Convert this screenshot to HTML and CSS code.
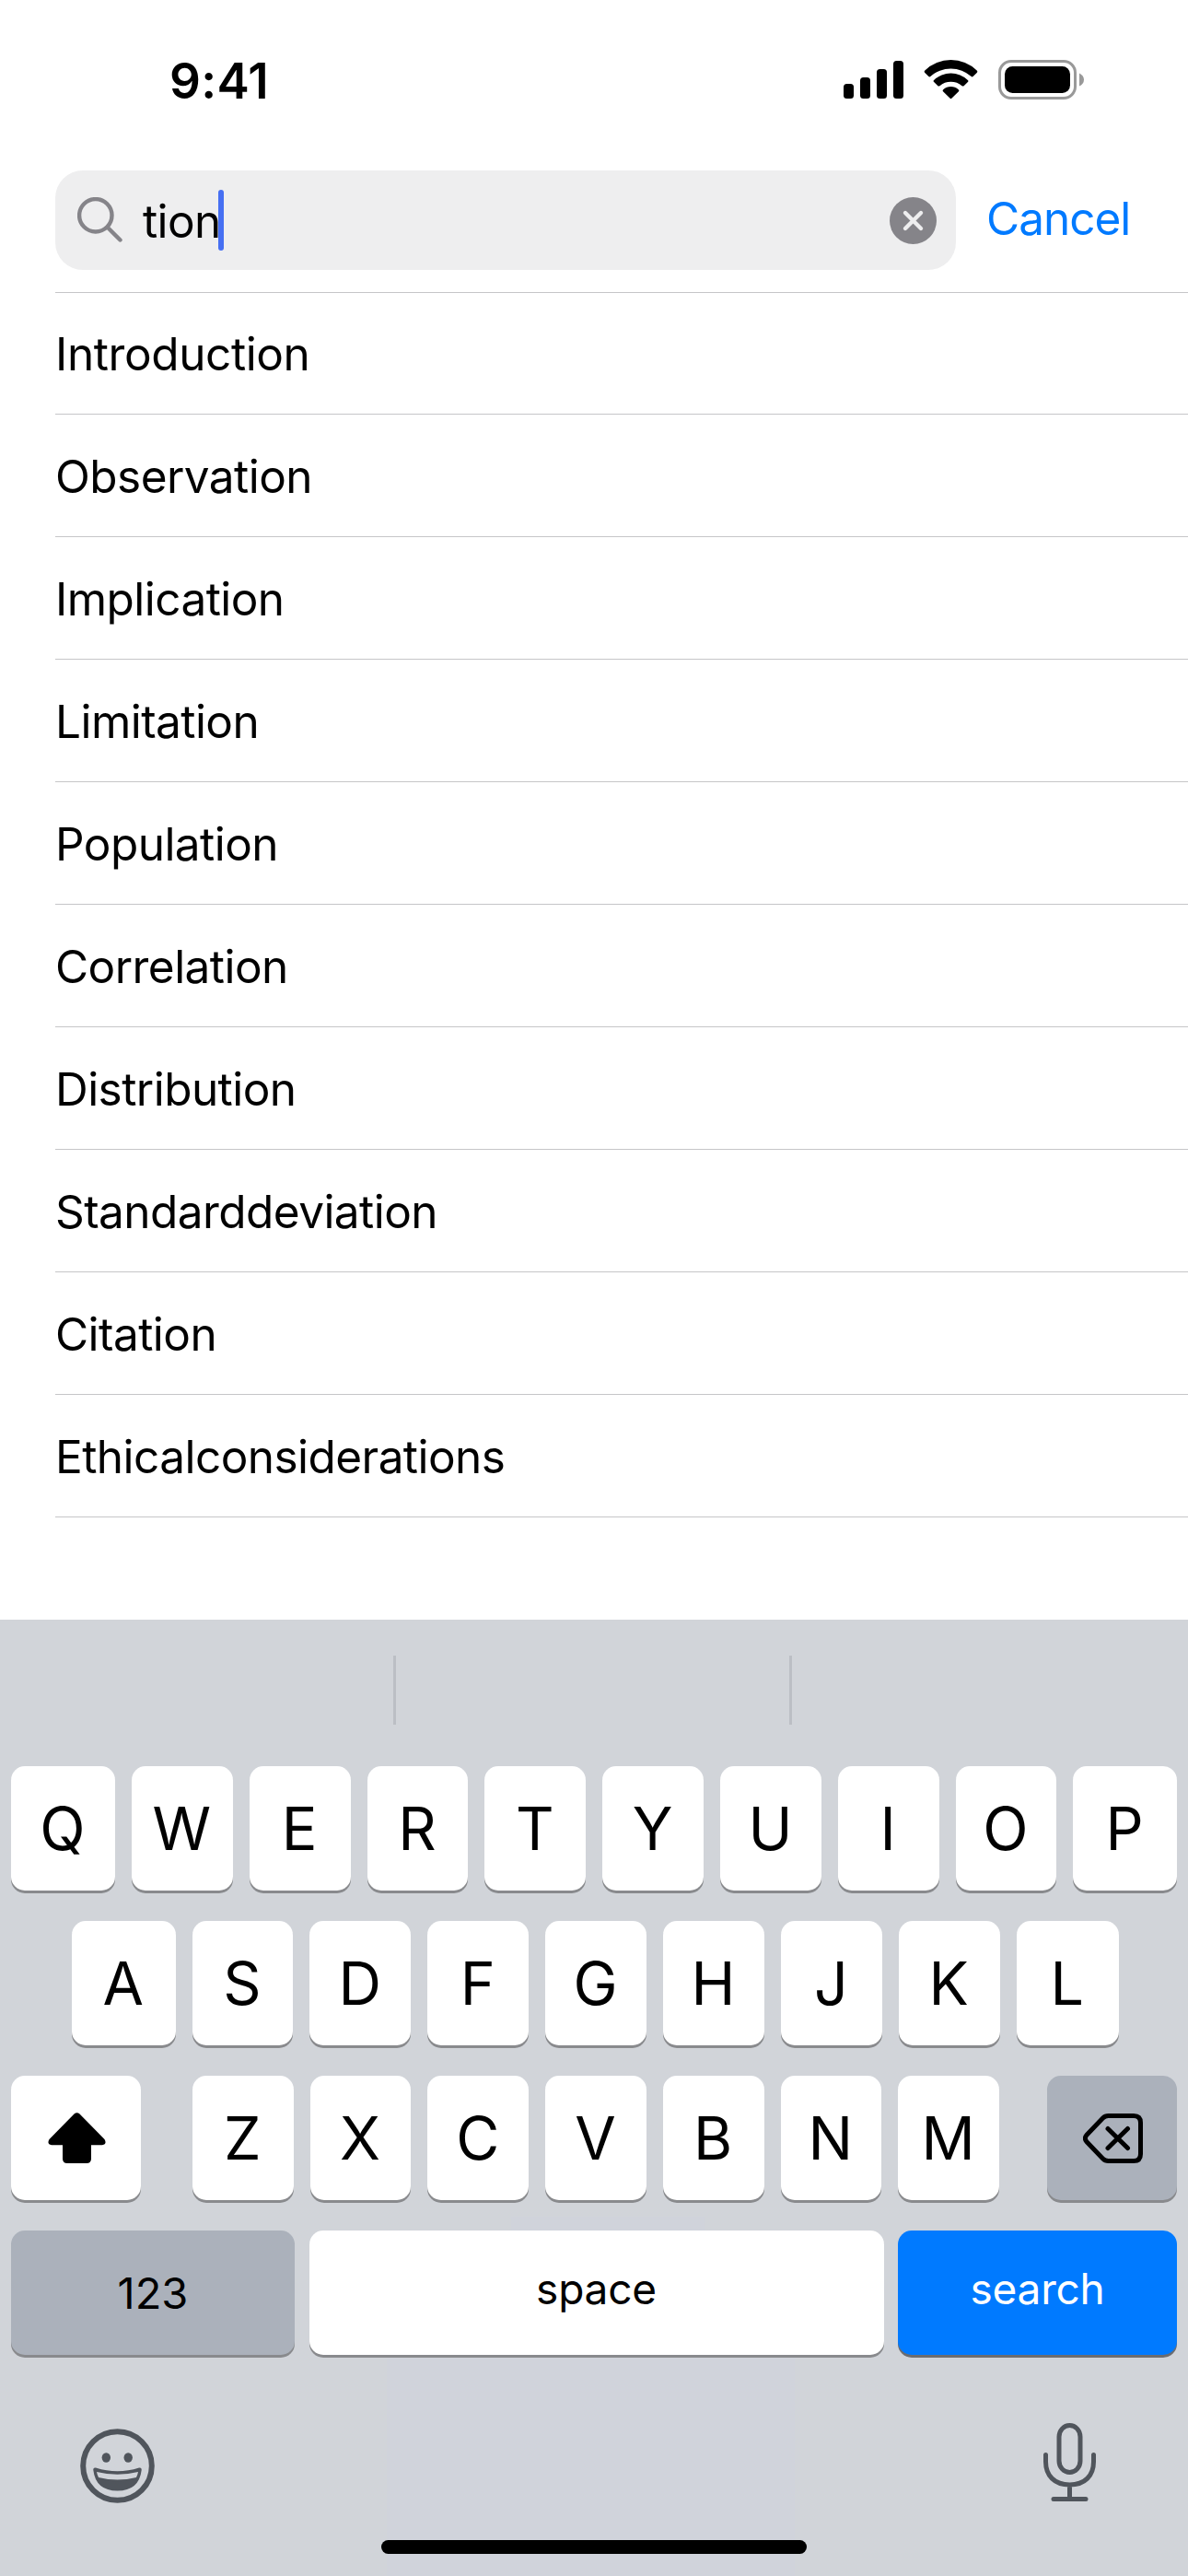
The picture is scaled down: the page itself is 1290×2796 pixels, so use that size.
FILE: index.html
```html
<!DOCTYPE html>
<html lang="en">
<head>
<meta charset="utf-8">
<title>Search</title>
<link rel="stylesheet" href="styles.css">
</head>
<body>
<div class="screen">
  <header class="status-bar">
    <time class="clock">9:41</time>
    <svg class="status-icons" viewBox="0 0 264 54" aria-hidden="true">
      <g>
        <rect x="0" y="34" width="11" height="16" rx="3.5"/>
        <rect x="18" y="27" width="11" height="23" rx="3.5"/>
        <rect x="36" y="18" width="11" height="32" rx="3.5"/>
        <rect x="54" y="9" width="11" height="41" rx="3.5"/>
      </g>
      <path d="M88.300 22Q87 20.800 88.300 19.500A40.500 40.500 0 0 1 144.700 19.500Q146 20.800 144.700 22L140.600 26Q139.700 26.800 138.700 26A33 33 0 0 0 94.300 26Q93.300 26.800 92.400 26Z"/>
      <path d="M98.100 32Q97 31 98.100 29.900A26.500 26.500 0 0 1 134.900 29.900Q136 31 134.900 32L130.600 36.200Q129.600 37 128.600 36.200A18.700 18.700 0 0 0 104.400 36.200Q103.400 37 102.400 36.200Z"/>
      <path d="M108 42.200Q107 41.200 108.200 40.200A12.500 12.500 0 0 1 124.800 40.200Q126 41.200 125 42.200L117.300 49.800Q116.500 50.600 115.700 49.800Z"/>
      <rect class="battery-shell" x="169.500" y="9.500" width="82" height="40" rx="12.500"/>
      <rect x="175" y="15" width="71" height="29" rx="8.500"/>
      <path class="battery-cap" d="M256 22.500Q261 25 261 29.500T256 36.500Z"/>
    </svg>
  </header>

  <div class="search-row">
    <label class="search-field">
      <svg class="search-icon" viewBox="0 0 50 50" aria-hidden="true"><circle cx="19.8" cy="19.8" r="17.7"/><path d="M33 33L46.5 46.5"/></svg>
      <span class="query">tion</span><span class="caret"></span>
      <svg class="clear-icon" viewBox="0 0 51 51" aria-hidden="true"><circle cx="25.5" cy="25.5" r="25.5"/><path d="M17 17L34 34M34 17L17 34"/></svg>
    </label>
    <a class="cancel">Cancel</a>
  </div>

  <ul class="results">
    <li>Introduction</li>
    <li>Observation</li>
    <li>Implication</li>
    <li>Limitation</li>
    <li>Population</li>
    <li>Correlation</li>
    <li>Distribution</li>
    <li>Standarddeviation</li>
    <li>Citation</li>
    <li>Ethicalconsiderations</li>
  </ul>

  <section class="keyboard">
    <div class="suggestions"><span></span><span></span><span></span></div>
    <div class="keys keys-top">
      <button class="key">Q</button><button class="key">W</button><button class="key">E</button><button class="key">R</button><button class="key">T</button><button class="key">Y</button><button class="key">U</button><button class="key">I</button><button class="key">O</button><button class="key">P</button>
    </div>
    <div class="keys keys-home">
      <button class="key">A</button><button class="key">S</button><button class="key">D</button><button class="key">F</button><button class="key">G</button><button class="key">H</button><button class="key">J</button><button class="key">K</button><button class="key">L</button>
    </div>
    <div class="keys keys-bottom">
      <button class="key shift" aria-label="Shift"><svg width="63" height="55" viewBox="0 0 63 55"><path d="M28.500 1.600Q31.500-1 34.500 1.600L61.500 29Q64.500 34.500 59 35.300H47V50Q47 55 42 55H21Q16 55 16 50V35.300H4Q-1.500 34.500 1.500 29Z"/></svg></button>
      <div class="letters">
        <button class="key">Z</button><button class="key">X</button><button class="key">C</button><button class="key">V</button><button class="key">B</button><button class="key">N</button><button class="key">M</button>
      </div>
      <button class="key gray delete" aria-label="Delete"><svg width="65" height="54" viewBox="0 0 65 54"><path d="M27.500 2.500H55Q62.500 2.500 62.500 10V44Q62.500 51.500 55 51.500H27.500Q24 51.500 21.500 49L3.800 30.500Q1 27 3.800 23.500L21.500 5Q24 2.500 27.500 2.500ZM27 16.500L48.500 37.500M48.500 16.500L27 37.500"/></svg></button>
    </div>
    <div class="keys keys-action">
      <button class="key gray word numbers">123</button>
      <button class="key word">space</button>
      <button class="key word search">search</button>
    </div>
    <div class="keyboard-footer">
      <svg class="emoji" width="81" height="81" viewBox="0 0 81 81" aria-hidden="true">
        <circle class="line" cx="40.500" cy="40.500" r="37.300"/>
        <ellipse cx="28.300" cy="31.500" rx="4.700" ry="5.200"/><ellipse cx="52.200" cy="31.500" rx="4.700" ry="5.200"/>
        <path fill-rule="evenodd" d="M17 42.500Q40.500 50 64 42.500Q67 42 66.700 45Q64 67.500 40.500 67.500Q17 67.500 14.300 45Q14 42 17 42.500ZM18 47Q18.500 50 20 53Q40.500 58 61 53Q62.500 50 63 47Q40.500 52.500 18 47Z"/>
      </svg>
      <svg width="57" height="86" viewBox="0 0 57 86" aria-hidden="true"><path class="line mic" d="M28.500 2.500A11.500 12.500 0 0 1 40 15V41A11.500 12.500 0 0 1 17 41V15A11.500 12.500 0 0 1 28.500 2.500ZM2.500 34.500V42C2.500 57 12 67 28.500 67S54.500 57 54.500 42V34.500M28.500 67V82.500M11 82.500H46"/></svg>
    </div>
    <div class="home-indicator"></div>
  </section>
</div>
</body>
</html>
```
FILE: styles.css
```css
* { box-sizing: border-box; }
body { margin: 0; background: #fff; font-family: Inter, "Liberation Sans", sans-serif; color: #000; }
.screen { width: 1290px; height: 2796px; display: flex; flex-direction: column; overflow: hidden; }
.status-bar { height: 185px; display: flex; padding: 57px 110px 0 184px; justify-content: space-between; }
.clock { font-size: 53px; line-height: 62px; font-weight: 600; letter-spacing: 0.3px; }
.status-icons { width: 264px; height: 54px; }
.battery-shell { fill: none; stroke: #999; stroke-width: 3; }
.battery-cap { fill: #999; }
.search-row { height: 132px; display: flex; align-items: flex-start; padding-left: 60px; gap: 33px; }
.search-field { width: 978px; height: 108px; border-radius: 30px; background: #eeeeef; display: flex; align-items: center; padding: 0 21px 0 24px; }
.search-icon { width: 50px; height: 50px; fill: none; stroke: #858489; stroke-width: 4.4; stroke-linecap: round; margin-right: 21px; }
.query { font-size: 49.5px; line-height: 60px; letter-spacing: -0.6px; margin: 2px -3px 0 0; }
.caret { width: 6px; height: 66px; border-radius: 3px; background: #466ff2; }
.clear-icon { width: 51px; height: 51px; margin-left: auto; fill: #858489; stroke-linecap: round; }
.clear-icon path { stroke: #eeeeef; stroke-width: 4.4; }
.cancel { color: #007aff; font-size: 49.5px; line-height: 60px; letter-spacing: -1px; margin-top: 22px; }
.results { list-style: none; margin: 0 0 0 60px; padding: 0; border-top: 1px solid #c6c6c8; height: 1441px; }
.results li { height: 133px; border-bottom: 1px solid #c6c6c8; font-size: 49.5px; line-height: 134px; letter-spacing: -0.55px; }
.results li:first-child { height: 132px; line-height: 132px; letter-spacing: -0.4px; }
.keyboard {
  height: 1038px;
  background:
    linear-gradient(#d0d3db, #d0d3db) 555px 648px / 210px 30px no-repeat,
    linear-gradient(#d0d3db, #d0d3db) 420px 720px / 443px 318px no-repeat,
    #d1d4d9;
}
.suggestions { height: 159px; padding: 39px 0 45px; display: grid; grid-template-columns: 430px 430px 430px; }
.suggestions span + span { box-shadow: -3px 0 #bcbfc5; }
.keys { display: grid; column-gap: 18px; height: 135px; margin: 0 12px 33px; }
.keys-top { grid-template-columns: 113px repeat(8, 1fr) 112.6px; }
.keys-home { grid-template-columns: 112.6px repeat(7, 1fr) 111.4px; margin-inline: 78px 75px; }
.keys-bottom { grid-template-columns: 141px 876px 141px; column-gap: 0; }
.keys-bottom .letters { margin: 0 -56px 0 56px; }
.keys-bottom .delete { margin: 0 -108px 0 108px; }
.letters { display: grid; grid-template-columns: repeat(7, 1fr); column-gap: 18px; }
.keys-action { grid-template-columns: 308px 624px 303px; column-gap: 15.5px; margin-bottom: 0; }
.key { border: 0; padding: 1px 1px 0 0; margin: 0; border-radius: 15px; background: #fff; box-shadow: 0 3px #898a8d; color: #000; font: 400 64.5px/1 Inter, "Liberation Sans", sans-serif; display: flex; align-items: center; justify-content: center; min-width: 0; }
.key.gray { background: #abb1bb; }
.key.word { font-size: 46px; padding: 0 0 9px; letter-spacing: -0.2px; }
.key.numbers { font-size: 47px; padding-bottom: 1px; letter-spacing: 0; }
.key.search { background: #007aff; color: #fff; box-shadow: 0 3px #6b6c70; }
.key.shift, .key.delete { padding: 0 0 0 2px; }
.delete svg { fill: none; stroke: #000; stroke-width: 5; stroke-linecap: round; stroke-linejoin: round; }
.keyboard-footer { height: 201px; display: flex; justify-content: space-between; align-items: flex-start; padding: 74px 100px 0 87px; fill: #50555c; }
.emoji { margin-top: 5.5px; }
.line { fill: none; stroke: #50555c; stroke-width: 6; }
.mic { stroke-width: 5; stroke-linecap: round; }
.home-indicator { width: 462px; height: 15px; margin-left: 414px; border-radius: 8px; background: #000; }
```
